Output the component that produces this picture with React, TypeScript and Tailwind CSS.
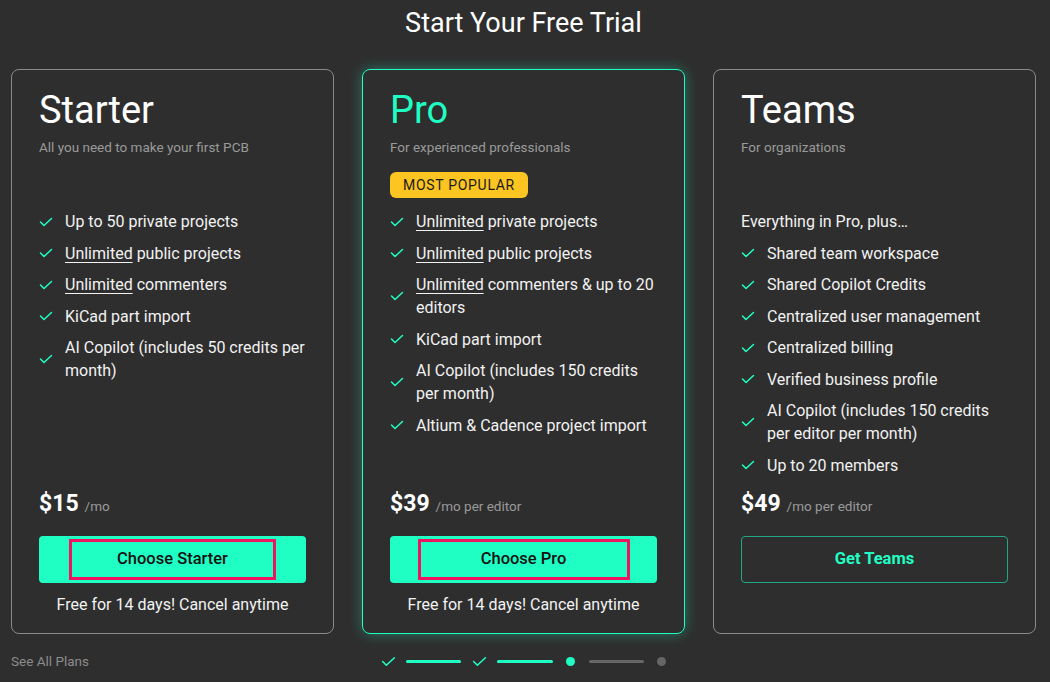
import React from "react";

// ─── Data ─────────────────────────────────────────────────────────────────────

type Feature = { u?: string; text: string };

interface Plan {
  name:     string;
  tagline:  string;
  popular?: boolean;
  intro?:   string;
  features: Feature[];
  price:    string;
  unit:     string;
  cta:      string;
  outline?: boolean;
  note?:    string;
}

const PLANS: Plan[] = [
  {
    name: "Starter",
    tagline: "All you need to make your first PCB",
    features: [
      { text: "Up to 50 private projects" },
      { u: "Unlimited", text: " public projects" },
      { u: "Unlimited", text: " commenters" },
      { text: "KiCad part import" },
      { text: "AI Copilot (includes 50 credits per month)" },
    ],
    price: "$15",
    unit: "/mo",
    cta: "Choose Starter",
    note: "Free for 14 days! Cancel anytime",
  },
  {
    name: "Pro",
    tagline: "For experienced professionals",
    popular: true,
    features: [
      { u: "Unlimited", text: " private projects" },
      { u: "Unlimited", text: " public projects" },
      { u: "Unlimited", text: " commenters & up to 20 editors" },
      { text: "KiCad part import" },
      { text: "AI Copilot (includes 150 credits per month)" },
      { text: "Altium & Cadence project import" },
    ],
    price: "$39",
    unit: "/mo per editor",
    cta: "Choose Pro",
    note: "Free for 14 days! Cancel anytime",
  },
  {
    name: "Teams",
    tagline: "For organizations",
    intro: "Everything in Pro, plus…",
    features: [
      { text: "Shared team workspace" },
      { text: "Shared Copilot Credits" },
      { text: "Centralized user management" },
      { text: "Centralized billing" },
      { text: "Verified business profile" },
      { text: "AI Copilot (includes 150 credits per editor per month)" },
      { text: "Up to 20 members" },
    ],
    price: "$49",
    unit: "/mo per editor",
    cta: "Get Teams",
    outline: true,
  },
];

// ─── Bits ─────────────────────────────────────────────────────────────────────

function Check({ className = "w-[14px] h-[10px]" }: { className?: string }) {
  return (
    <svg viewBox="0 0 14 10" fill="none" stroke="#1fffc4" strokeWidth="1.5"
      strokeLinecap="round" strokeLinejoin="round" className={className}>
      <polyline points="1.5 5 5 8.5 12.5 1.5" />
    </svg>
  );
}

function PlanCard({ plan }: { plan: Plan }) {
  const pro = plan.popular;
  return (
    <div
      className={
        "flex flex-col rounded-lg pt-[21px] px-[27px] pb-[17px] h-[565px] " +
        (pro
          ? "border border-[#1fffc4] shadow-[0_0_14px_rgba(31,255,196,0.35)]"
          : "border border-[#8a8a8a]")
      }
    >
      <h2 className={"text-[38px] leading-[38px] " + (pro ? "text-[#1fffc4]" : "text-white")}>
        {plan.name}
      </h2>
      <p className="mt-[10px] text-[13.5px] leading-[16px] text-[#9a9a9a]">{plan.tagline}</p>

      {/* Badge slot */}
      <div className="mt-[17px] h-[26px]">
        {pro && (
          <span className="inline-flex items-center h-[26px] px-[13px] rounded-md bg-[#fcc521] text-[#1a1a1a] text-[14px] tracking-[0.05em]">
            MOST POPULAR
          </span>
        )}
      </div>

      {/* Features */}
      <div className="mt-3 -mr-1 flex flex-col gap-[8.5px] text-[16px] leading-[23px] text-[#f2f2f2]">
        {plan.intro && <p>{plan.intro}</p>}
        {plan.features.map((f, i) => (
          <div key={i} className="flex items-center gap-3">
            <span className="w-[14px] flex-shrink-0 flex items-center">
              <Check />
            </span>
            <span>
              {f.u && <span className="underline underline-offset-[3px]">{f.u}</span>}
              {f.text}
            </span>
          </div>
        ))}
      </div>

      {/* Price + CTA */}
      <div className="mt-auto flex items-baseline gap-[6px]">
        <span className="text-[23px] leading-[28px] font-bold text-white">{plan.price}</span>
        <span className="text-[13.5px] text-[#9a9a9a]">{plan.unit}</span>
      </div>

      <button
        className={
          "mt-[18px] h-[47px] w-full rounded-[4px] flex items-center justify-center text-[16.5px] " +
          (plan.outline
            ? "border border-[#1fa883] text-[#1fffc4] font-bold"
            : "bg-[#1fffc4] text-[#111] font-medium")
        }
      >
        {plan.outline ? (
          plan.cta
        ) : (
          <span
            className={
              "flex items-center justify-center h-[41px] border-[3px] border-[#f0135f] " +
              (pro ? "w-[212px]" : "w-[207px]")
            }
          >
            {plan.cta}
          </span>
        )}
      </button>

      <p className="mt-[10px] text-center text-[16px] leading-[23px] text-[#f2f2f2] h-[23px]">
        {plan.note}
      </p>
    </div>
  );
}

function Stepper() {
  return (
    <div className="flex items-center justify-center">
      <Check className="w-[15px] h-[11px]" />
      <span className="ml-[10px] w-[55px] h-[3px] rounded-full bg-[#1fffc4]" />
      <span className="ml-[11px]"><Check className="w-[15px] h-[11px]" /></span>
      <span className="ml-[10px] w-[56px] h-[3px] rounded-full bg-[#1fffc4]" />
      <span className="ml-[13px] w-[9px] h-[9px] rounded-full bg-[#1fffc4]" />
      <span className="ml-[14px] w-[55px] h-[3px] rounded-full bg-[#666]" />
      <span className="ml-[13px] w-[9px] h-[9px] rounded-full bg-[#666]" />
    </div>
  );
}

// ─── Page ─────────────────────────────────────────────────────────────────────

export default function App() {
  return (
    <div
      className="min-h-screen bg-[#2e2e2e] pt-[7px] pl-[11px] pr-[14px]"
      style={{ fontFamily: "Roboto, 'Liberation Sans', sans-serif" }}
    >
      <h1 className="text-center text-[27px] leading-[32px] text-white">Start Your Free Trial</h1>

      <div className="mt-[30px] grid grid-cols-3 gap-7">
        {PLANS.map((p) => (
          <PlanCard key={p.name} plan={p} />
        ))}
      </div>

      <div className="mt-[17px] grid grid-cols-3 gap-7 items-center">
        <a className="text-[13.5px] text-[#8c8c8c]">See All Plans</a>
        <Stepper />
        <div />
      </div>
    </div>
  );
}
